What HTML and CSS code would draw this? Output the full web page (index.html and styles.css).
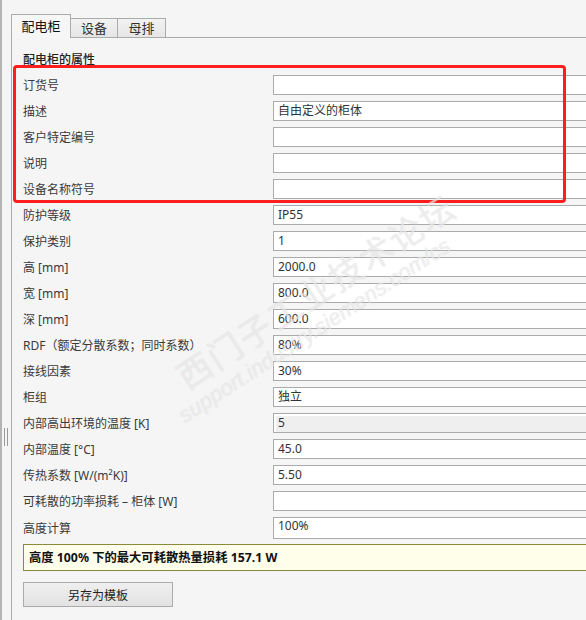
FILE: index.html
```html
<!DOCTYPE html>
<html lang="zh-CN">
<head>
<meta charset="utf-8">
<link rel="stylesheet" href="styles.css">
</head>
<body>
<div class="app">
  <div class="rail"><div class="grip"></div></div>
  <div class="panel">
    <div class="tabs">
      <div class="tab active">配电柜</div>
      <div class="tab">设备</div>
      <div class="tab">母排</div>
      <div class="tab-fill"></div>
    </div>
    <div class="content">
      <div class="section">配电柜的属性</div>
      <div class="rows">
        <div class="row"><span class="label">订货号</span><span class="field"></span></div>
        <div class="row"><span class="label">描述</span><span class="field">自由定义的柜体</span></div>
        <div class="row"><span class="label">客户特定编号</span><span class="field"></span></div>
        <div class="row"><span class="label">说明</span><span class="field"></span></div>
        <div class="row"><span class="label">设备名称符号</span><span class="field"></span></div>
        <div class="row"><span class="label">防护等级</span><span class="field">IP55</span></div>
        <div class="row"><span class="label">保护类别</span><span class="field">1</span></div>
        <div class="row"><span class="label">高 [mm]</span><span class="field">2000.0</span></div>
        <div class="row"><span class="label">宽 [mm]</span><span class="field">800.0</span></div>
        <div class="row"><span class="label">深 [mm]</span><span class="field">600.0</span></div>
        <div class="row"><span class="label">RDF（额定分散系数；同时系数）</span><span class="field">80%</span></div>
        <div class="row"><span class="label">接线因素</span><span class="field">30%</span></div>
        <div class="row"><span class="label">柜组</span><span class="field">独立</span></div>
        <div class="row"><span class="label">内部高出环境的温度 [K]</span><span class="field disabled">5</span></div>
        <div class="row"><span class="label">内部温度 [°C]</span><span class="field">45.0</span></div>
        <div class="row"><span class="label">传热系数 [W/(m²K)]</span><span class="field">5.50</span></div>
        <div class="row"><span class="label">可耗散的功率损耗 – 柜体 [W]</span><span class="field"></span></div>
        <div class="row tall"><span class="label">高度计算</span><span class="field area">100%</span></div>
      </div>
      <div class="info">高度 100% 下的最大可耗散热量损耗 157.1 W</div>
      <div class="actions"><button class="btn">另存为模板</button></div>
    </div>
  </div>
  <div class="highlight"></div>
  <div class="watermark">
    <div class="wm-big">西门子工业技术论坛</div>
    <div class="wm-small">support.industry.siemens.com/cs</div>
  </div>
</div>
</body>
</html>
```

FILE: styles.css
```css
html, body {
  margin: 0;
  padding: 0;
  background: #f5f5f5;
  overflow: hidden;
}
body {
  width: 586px;
  height: 620px;
  font-family: "Noto Sans", "Noto Sans CJK SC", sans-serif;
  font-size: 12px;
  color: #333;
}
.app {
  position: relative;
  display: flex;
  height: 620px;
}
.rail {
  width: 9px;
  border-left: 2px solid #b4b4b4;
  display: flex;
  align-items: flex-start;
}
.grip {
  margin-top: 428px;
  margin-left: 2px;
  width: 2px;
  height: 18px;
  border-left: 1px solid #9a9a9a;
  border-right: 1px solid #9a9a9a;
}
.panel {
  flex: 1;
  border-left: 1px solid #ababab;
  margin-top: 14px;
  display: flex;
  flex-direction: column;
  min-width: 0;
}
.tabs {
  display: flex;
  align-items: flex-end;
  height: 24px;
  margin-left: -1px;
}
.tab {
  box-sizing: border-box;
  flex: none;
  height: 20px;
  padding: 0;
  border: 1px solid #ababab;
  border-left: none;
  background: linear-gradient(#f2f2f2, #e6e6e6);
  line-height: 18px;
  font-size: 13px;
  color: #333;
  width: 47px;
  text-align: center;
  white-space: nowrap;
}
.tab.active {
  height: 24px;
  width: 60px;
  border-left: 1px solid #ababab;
  border-bottom: none;
  background: #f6f6f6;
  line-height: 22px;
  color: #111;
}
.tab:nth-child(3) {
  width: 48px;
}
.tab-fill {
  flex: 1;
  height: 1px;
  background: #ababab;
}
.content {
  padding: 14px 0 0 11px;
}
.section {
  height: 16px;
  line-height: 16px;
  color: #222;
  font-weight: 500;
}
.rows {
  margin-top: 7px;
  display: flex;
  flex-direction: column;
  gap: 6px;
}
.row {
  display: flex;
  align-items: center;
  height: 20px;
}
.row.tall {
  height: 22px;
}
.label {
  width: 250px;
  flex: none;
  color: #3a3a3a;
  white-space: nowrap;
}
.field {
  box-sizing: border-box;
  flex: none;
  width: 330px;
  height: 20px;
  border: 1px solid #ababab;
  background: #fff;
  padding-left: 4px;
  line-height: 18px;
  color: #333;
  white-space: nowrap;
}
.field.disabled {
  background: #efefef;
  box-shadow: inset 1px 1px 0 1px #fff;
}
.field.area {
  height: 22px;
  line-height: 16px;
}
.info {
  box-sizing: border-box;
  margin-top: 5px;
  height: 27px;
  width: 580px;
  border: 1px solid #8a8a3c;
  background: #fefeeb;
  padding-left: 5px;
  line-height: 25px;
  font-weight: 700;
  font-size: 12.3px;
  color: #111;
  white-space: nowrap;
}
.actions {
  margin-top: 11px;
}
.btn {
  box-sizing: border-box;
  width: 150px;
  height: 25px;
  border: 1px solid #ababab;
  background: linear-gradient(#efefef, #e2e2e2);
  font-family: inherit;
  font-size: 12px;
  color: #222;
  padding: 0;
}
.highlight {
  position: absolute;
  left: 13px;
  top: 65px;
  width: 547px;
  height: 132px;
  border: 3px solid #ff1e1e;
  border-radius: 4px;
  pointer-events: none;
}
.watermark {
  position: absolute;
  left: 95px;
  top: 285px;
  transform: rotate(-33deg);
  transform-origin: left top;
  pointer-events: none;
  color: rgba(255,255,255,0.5);
  text-shadow: 0 0 1px rgba(170,170,170,0.45);
  white-space: nowrap;
}
.wm-big {
  font-family: "Noto Sans CJK SC", sans-serif;
  font-size: 34px;
  letter-spacing: 2px;
  margin-left: 20px;
  margin-top: 100px;
}
.wm-small {
  font-family: "Liberation Sans", sans-serif;
  font-size: 22px;
  font-style: italic;
  margin-top: -4px;
}
```
